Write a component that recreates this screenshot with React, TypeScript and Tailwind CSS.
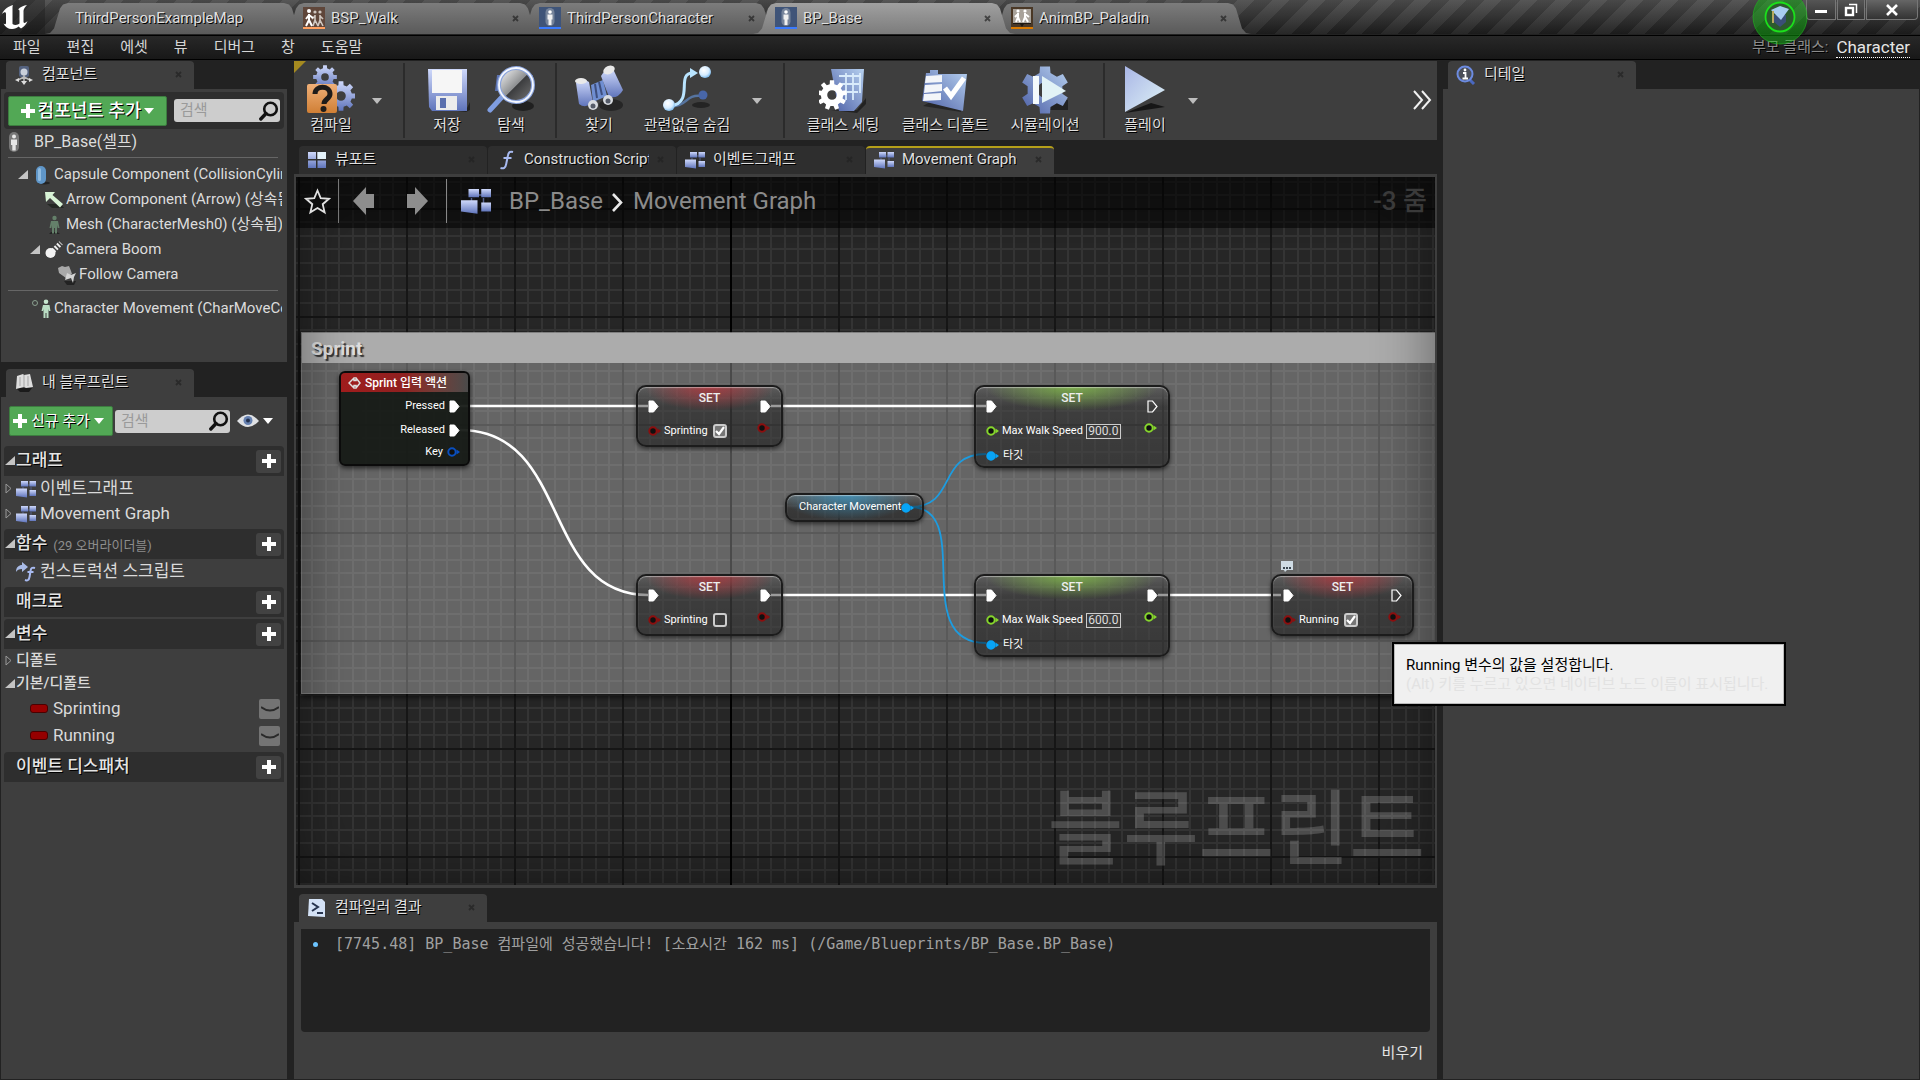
import type { ReactNode } from 'react';

const shadow = '[text-shadow:1px_1px_0_#000]';

/** Closed outline of a cog wheel with a round hole. */
function gear(cx: number, cy: number, r: number, teeth: number) {
  const inner = r * 0.74;
  const pts: string[] = [];
  for (let i = 0; i < teeth; i++) {
    const a = (i / teeth) * Math.PI * 2 - Math.PI / 2;
    const step = (Math.PI * 2) / teeth;
    const at = (rad: number, ang: number) =>
      `${(cx + rad * Math.cos(ang)).toFixed(2)} ${(cy + rad * Math.sin(ang)).toFixed(2)}`;
    pts.push(at(inner, a - step * 0.3), at(r, a - step * 0.2), at(r, a + step * 0.2), at(inner, a + step * 0.3));
  }
  const h = r * 0.32;
  return `M${pts.join('L')}ZM${cx - h} ${cy}a${h} ${h} 0 1 0 ${h * 2} 0a${h} ${h} 0 1 0 ${-h * 2} 0Z`;
}

function Defs() {
  return (
    <svg width="0" height="0" className="absolute" aria-hidden="true">
      <defs>
        <linearGradient id="blue" x1="0" y1="0" x2="0" y2="1">
          <stop offset="0" stopColor="#cfd9fb" />
          <stop offset="1" stopColor="#5f74bb" />
        </linearGradient>
        <linearGradient id="deep" x1="1" y1="0" x2="0" y2="1">
          <stop offset="0" stopColor="#b6d0ef" />
          <stop offset="1" stopColor="#4c5fa6" />
        </linearGradient>
        <linearGradient id="glass" x1="0" y1="0" x2="1" y2="1">
          <stop offset="0" stopColor="#fff" />
          <stop offset="0.5" stopColor="#8e9092" />
          <stop offset="0.52" stopColor="#3c3d3f" />
          <stop offset="1" stopColor="#777" />
        </linearGradient>
        <linearGradient id="orange" x1="0" y1="0" x2="0" y2="1">
          <stop offset="0" stopColor="#f0b078" />
          <stop offset="1" stopColor="#d07f35" />
        </linearGradient>
        <linearGradient id="play" x1="0" y1="0" x2="1" y2="1">
          <stop offset="0" stopColor="#a9b6e6" />
          <stop offset="1" stopColor="#dff3f6" />
        </linearGradient>
        <radialGradient id="ball" cx="0.4" cy="0.35" r="0.7">
          <stop offset="0" stopColor="#fff" />
          <stop offset="0.6" stopColor="#d5ecff" />
          <stop offset="1" stopColor="#6fb2e8" />
        </radialGradient>
      </defs>
    </svg>
  );
}

function Icon({ size = 20, box = 20, children }: { size?: number; box?: number; children: ReactNode }) {
  return (
    <svg width={size} height={size} viewBox={`0 0 ${box} ${box}`} className="shrink-0" aria-hidden="true">
      {children}
    </svg>
  );
}

function GraphIcon({ size = 20 }: { size?: number }) {
  return (
    <Icon size={size}>
      <path d="M10 6h4M15 8v5M7 8v4" stroke="#55608a" strokeWidth="1" />
      <rect x="5" y="2" width="7" height="5.5" fill="url(#blue)" />
      <rect x="13.5" y="2" width="6.5" height="5.5" fill="url(#blue)" />
      <rect x="13.5" y="11" width="6.5" height="6" fill="url(#blue)" />
      <path d="M0 9.5h11v9L0 17z" fill="url(#blue)" />
    </Icon>
  );
}

function FnIcon({ size = 20, arrow = false }: { size?: number; arrow?: boolean }) {
  return (
    <Icon size={size}>
      {arrow && <path d="M0 10C0 5 3 3 6 3V0l6 5-6 5V7C3 7 1 8 0 10z" fill="#a9bbe6" />}
      <path
        d={arrow ? 'M19 6c-3-1-4 0-4.500 3l-1 6c-.5 3-2 4-4.500 3M11.500 10h6' : 'M17 2c-3-1-4.500 0-5.200 4l-1.600 8c-.7 4-2.500 5-5.700 4M7.500 8h8'}
        fill="none"
        stroke="#a8baf0"
        strokeWidth="2"
      />
    </Icon>
  );
}

function PawnIcon() {
  return (
    <Icon>
      <rect x="5" y="0" width="10" height="20" rx="5" fill="#777" />
      <circle cx="10" cy="4.500" r="2" fill="#e8e8e8" />
      <path d="M7 7.500h6v5.500h-1.300v5.500H8.300V13H7z" fill="#e8e8e8" />
    </Icon>
  );
}

function PersonIcon({ color }: { color: string }) {
  return (
    <Icon>
      <path d="M5 19h11l-3-2H7z" fill="#222" />
      <circle cx="10.500" cy="3" r="2.200" fill={color} />
      <path d="M7 6h7l1.500 7h-1.800L13 10v8.500h-2V13h-1v5.500H8V10l-.7 3H5.500z" fill={color} />
    </Icon>
  );
}

function SearchIcon() {
  return (
    <svg width="20" height="20" viewBox="0 0 20 20" fill="none" stroke="#111" className="shrink-0" aria-hidden="true">
      <circle cx="11.500" cy="8" r="6.300" strokeWidth="2.600" />
      <path d="M7 12.500 1.800 18" strokeWidth="3.400" strokeLinecap="round" />
    </svg>
  );
}

function Plus() {
  return (
    <svg width="14" height="14" viewBox="0 0 14 14" className="shrink-0" aria-hidden="true">
      <path d="M5 0h4v5h5v4H9v5H5V9H0V5h5z" fill="#fff" />
    </svg>
  );
}

function Caret({ color = '#fff' }: { color?: string }) {
  return (
    <svg width="10" height="6" viewBox="0 0 10 6" className="shrink-0" aria-hidden="true">
      <path d="M0 0h10L5 6z" fill={color} />
    </svg>
  );
}

function Twisty({ open }: { open?: boolean }) {
  return (
    <svg width="10" height="10" viewBox="0 0 10 10" className="shrink-0" aria-hidden="true">
      {open ? <path d="M10 0v9H0z" fill="#c4c4c4" /> : <path d="M2 0v9l5-4.500z" fill="none" stroke="#999" />}
    </svg>
  );
}

function CloseMark() {
  return (
    <svg width="7" height="7" viewBox="0 0 7 7" className="shrink-0" aria-hidden="true">
      <path d="M1 1l5 5M6 1 1 6" stroke="#222" strokeOpacity="0.7" strokeWidth="1.800" />
    </svg>
  );
}

interface DocTabProps {
  label: string;
  icon?: ReactNode;
  active?: boolean;
  layer: string;
}

function DocTab({ label, icon, active, layer }: DocTabProps) {
  return (
    <button
      type="button"
      className={`relative flex h-[31px] w-[262px] shrink-0 items-center pr-6 pb-px text-left text-[15px] text-[#e0e0e0] [clip-path:polygon(0_100%,5px_97%,9px_82%,15px_18%,18px_5%,23px_0,calc(100%-23px)_0,calc(100%-18px)_5%,calc(100%-15px)_18%,calc(100%-9px)_82%,calc(100%-5px)_97%,100%_100%)] ${layer} ${icon ? 'pl-[22px]' : 'pl-[30px]'} ${active ? 'bg-linear-to-b from-[#a0a0a0] to-[#7c7c7c]' : 'bg-linear-to-b from-[#7c7c7c] to-[#5a5a5a]'}`}
    >
      {icon && <span className="mr-[6px] flex">{icon}</span>}
      <span className={`flex-1 truncate ${shadow}`}>{label}</span>
      {icon && <CloseMark />}
    </button>
  );
}

function PawnThumb() {
  return (
    <Icon size={22} box={22}>
      <rect width="22" height="22" fill="#3f5478" />
      <rect x="6.500" y="1" width="9" height="18" rx="4.500" fill="#75839a" />
      <circle cx="11" cy="5" r="1.800" fill="#fff" />
      <path d="M8.500 7.500h5v5h-1v5.500h-3v-5.500h-1z" fill="#f0f0f0" />
      <rect y="20" width="22" height="2" fill="#3b7bff" />
    </Icon>
  );
}

function WalkThumb() {
  return (
    <Icon size={22} box={22}>
      <rect width="22" height="22" fill="#5f463a" />
      <g fill="none" stroke="#cfc6bf" strokeWidth="1.600">
        <path d="M12 8v5l-2 6M12 13l3 6M12 9l-3 3M17 8v5l-2 6M17 13l3 6M17 9l3 3" />
      </g>
      <path d="M6 7v6l-3 6M6 13l3 6M6 8l-3 4M6 8l4 3" fill="none" stroke="#fff" strokeWidth="2" />
      <circle cx="6" cy="4" r="2" fill="#fff" />
      <circle cx="12" cy="5" r="1.600" fill="#cfc6bf" />
      <circle cx="17" cy="5" r="1.600" fill="#cfc6bf" />
      <rect y="20" width="22" height="2" fill="#ffa060" />
    </Icon>
  );
}

function AnimThumb() {
  return (
    <Icon size={22} box={22}>
      <rect width="22" height="22" fill="#4a3826" />
      <rect x="2" y="2" width="18" height="14" fill="#a8a29a" />
      <path d="M7 6v4l-2 5M7 10l2 5M7 7l-3 3M14 6v4l-2 5M14 10l3 5M14 7l4 3" fill="none" stroke="#fff" strokeWidth="2" />
      <circle cx="7" cy="4" r="1.600" fill="#fff" />
      <circle cx="14" cy="4" r="1.600" fill="#fff" />
      <path d="M2 16h18v1H2zM9 17h4l-2 3z" fill="#1d1710" />
      <rect y="20" width="22" height="2" fill="#d97a00" />
    </Icon>
  );
}

function TitleBar() {
  return (
    <header className="relative flex h-[34px] items-end bg-[repeating-linear-gradient(135deg,#ffffff0c_0_12px,#00000014_12px_25px),linear-gradient(#4e4e4e,#1d1d1d)]">
      <div className="flex h-full w-[45px] shrink-0 items-center bg-[#1c1c1c]/40">
        <svg width="26" height="26" viewBox="0 0 26 26" className="ml-[2px]" aria-hidden="true">
          <path
            d="M11 1C7 2 2 5 0 10c2-2 4-2.500 4 0v9c0 1.500-1 1.500-2.500.5C3 23 6 25 10 25c3 0 5-1 6.500-2.500L19 24.500c3-1.500 5.500-4.500 6.500-7.500-1.500 1.500-3.500 3-4 1V7c0-2 1.500-4 3.500-6-3 .5-7 2-9 4.500 1-.3 1.500.5 1.500 2v12c-1.500 1.500-5 2-7 .5V5c0-2 0-3 .5-4z"
            fill="#fff"
          />
        </svg>
      </div>
      <DocTab label="ThirdPersonExampleMap" layer="z-[5]" />
      <div className="-ml-[26px] flex min-w-0 flex-1">
        <DocTab label="BSP_Walk" layer="z-[4]" icon={<WalkThumb />} />
        <div className="-ml-[26px] flex">
          <DocTab label="ThirdPersonCharacter" layer="z-[3]" icon={<PawnThumb />} />
        </div>
        <div className="-ml-[26px] flex">
          <DocTab label="BP_Base" active layer="z-[6]" icon={<PawnThumb />} />
        </div>
        <div className="-ml-[26px] flex">
          <DocTab label="AnimBP_Paladin" layer="z-[2]" icon={<AnimThumb />} />
        </div>
      </div>
      <div className="mr-[2px] flex gap-px self-start">
        <button type="button" aria-label="Minimize" className="grid h-5 w-[30px] place-items-center rounded-bl border border-[#777] border-t-0 bg-linear-to-b from-[#555] to-[#333]">
          <span className="mt-1 h-[3px] w-3 bg-white" />
        </button>
        <button type="button" aria-label="Restore" className="grid h-5 w-[28px] place-items-center border border-[#777] border-t-0 bg-linear-to-b from-[#555] to-[#333]">
          <svg width="14" height="14" viewBox="0 0 14 14" fill="none" stroke="#fff" aria-hidden="true">
            <path d="M5 1.500h7.500V10" strokeWidth="1.500" />
            <rect x="2" y="5" width="7" height="7" strokeWidth="2.400" />
          </svg>
        </button>
        <button type="button" aria-label="Close" className="grid h-5 w-[52px] place-items-center rounded-br border border-[#777] border-t-0 bg-linear-to-b from-[#666] to-[#333]">
          <svg width="12" height="12" viewBox="0 0 12 12" stroke="#fff" strokeWidth="2.600" aria-hidden="true">
            <path d="M1 1l10 10M11 1 1 11" />
          </svg>
        </button>
      </div>
      <svg width="56" height="56" viewBox="0 0 56 56" className="pointer-events-none absolute -top-[11px] right-[112px] z-10" aria-hidden="true">
        <circle cx="28" cy="28" r="27" fill="#0bd00b" fillOpacity="0.4" stroke="#1fb81f" strokeOpacity="0.6" />
        <circle cx="28" cy="28" r="14.500" fill="#2c5a2c" stroke="#1be01b" strokeWidth="1.800" />
        <path d="M22 26v7l6 5 6-5v-7z" fill="#3b4f78" />
        <path d="M19 21l9-4 9 3-8 11z" fill="#a9cdf0" />
        <path d="M21 22v12" stroke="#b8a860" strokeWidth="2" />
      </svg>
    </header>
  );
}

function MenuBar() {
  const items = ['파일', '편집', '에셋', '뷰', '디버그', '창', '도움말'];
  return (
    <nav className="mt-px flex h-[25px] items-center border-y border-black bg-linear-to-b from-[#282828] to-[#181818] text-[15px] text-[#d6d6d6]">
      <div className="flex flex-1 gap-[26px] pl-[13px]">
        {items.map((item) => (
          <button key={item} type="button">
            {item}
          </button>
        ))}
      </div>
      <span className={`mr-2 text-[#8c8c8c] ${shadow}`}>부모 클래스:</span>
      <a href="#character" className="mr-[10px] border-b border-dotted border-white text-[17px] leading-5 text-[#e6e6e6]">
        Character
      </a>
    </nav>
  );
}

interface PanelTabProps {
  label: string;
  icon: ReactNode;
  idle?: boolean;
  marked?: boolean;
}

function PanelTab({ label, icon, idle, marked }: PanelTabProps) {
  return (
    <button
      type="button"
      className={`flex h-7 w-[188px] items-center gap-2 rounded-t-sm border-t-2 pr-3 pb-[3px] pl-2 text-left text-[15px] text-[#e0e0e0] ${idle ? 'border-[#2e2e2e] bg-[#2e2e2e]' : 'bg-[#3e3e3e]'} ${marked ? 'border-[#b59f1a]' : idle ? '' : 'border-[#3e3e3e]'}`}
    >
      {icon}
      <span className={`flex-1 overflow-hidden whitespace-nowrap ${shadow}`}>{label}</span>
      <CloseMark />
    </button>
  );
}

function SearchBox({ id, width }: { id: string; width: string }) {
  return (
    <label htmlFor={id} className={`flex h-[23px] items-center rounded-[3px] bg-[#cdcdcd] pr-px ${width}`}>
      <input
        id={id}
        type="text"
        placeholder="검색"
        aria-label="검색"
        className="w-full min-w-0 bg-transparent pl-[6px] text-[15px] text-black outline-none placeholder:text-[#9a9a9a]"
      />
      <SearchIcon />
    </label>
  );
}

interface TreeRowProps {
  label: string;
  icon: ReactNode;
  pad: string;
  open?: boolean;
}

function TreeRow({ label, icon, pad, open }: TreeRowProps) {
  return (
    <div className={`flex h-[25px] items-center overflow-hidden text-[15px] text-[#dcdcdc] ${pad}`}>
      <span className="flex w-[14px] shrink-0">{open && <Twisty open />}</span>
      {icon}
      <span className="ml-[2px] overflow-hidden whitespace-nowrap">{label}</span>
    </div>
  );
}

function ComponentsPanel() {
  return (
    <section>
      <div className="pl-[5px]">
        <PanelTab
          label="컴포넌트"
          icon={
            <Icon>
              <rect x="5" y="1" width="10" height="11" rx="2" fill="#54627f" />
              <circle cx="10" cy="7" r="3.500" fill="#c9cfda" />
              <path d="M10 10v7M10 12l-6 3M10 12l6 3" stroke="#bbb" strokeWidth="1.500" />
              <path d="M1 15l4-2v4zM19 15l-4-2v4zM7 16h6l-3 4z" fill="#ddd" />
            </Icon>
          }
        />
      </div>
      <div className="bg-[#3e3e3e] px-[3px] pt-[3px] pb-[41px]">
        <div className="flex h-[37px] items-center gap-[7px] rounded bg-[#2e2e2e] px-1">
          <button type="button" className={`flex h-[30px] w-[159px] shrink-0 items-center justify-center gap-[3px] rounded-[2px] border border-[#3d7d40] bg-[#52a855] text-lg font-medium whitespace-nowrap text-white ${shadow}`}>
            <Plus />
            컴포넌트 추가
            <Caret />
          </button>
          <SearchBox id="component-search" width="min-w-0 flex-1" />
        </div>
        <div className="mr-[2px]">
          <div className="flex h-[25px] items-center gap-[10px] text-base text-[#dcdcdc]">
            <PawnIcon />
            BP_Base(셀프)
          </div>
          <hr className="mx-1 mt-[3px] mb-1 border-[#666]" />
          <TreeRow
            label="Capsule Component (CollisionCylinder) (상속됨)"
            pad="pl-[14px]"
            open
            icon={
              <Icon>
                <ellipse cx="12" cy="18" rx="6" ry="1.500" fill="#222" />
                <rect x="4" y="1" width="10" height="18" rx="5" fill="#5f96c8" />
                <rect x="6" y="3" width="3" height="13" rx="1.500" fill="#8fbbe0" />
              </Icon>
            }
          />
          <TreeRow
            label="Arrow Component (Arrow) (상속됨)"
            pad="pl-[26px]"
            icon={
              <Icon>
                <path d="M3 14h14l3 4H8z" fill="#242824" />
                <path d="M1 2h10L8.500 5l10.500 9-3 3.500L6 8l-4 4z" fill="#d8f3d6" />
              </Icon>
            }
          />
          <TreeRow label="Mesh (CharacterMesh0) (상속됨)" pad="pl-[26px]" icon={<PersonIcon color="#64806a" />} />
          <TreeRow
            label="Camera Boom"
            pad="pl-[26px]"
            open
            icon={
              <Icon>
                <path d="M9 11l8-8" stroke="#eee" strokeWidth="5" strokeDasharray="2 1.500" />
                <circle cx="6.500" cy="13" r="5" fill="#f2f2f2" />
              </Icon>
            }
          />
          <TreeRow
            label="Follow Camera"
            pad="pl-[39px]"
            icon={
              <Icon>
                <path d="M7 16h12l-2 4H10z" fill="#222" />
                <path d="M1 3l4-2 3 1 4-1 2 5 1 3-6 4-7-5z" fill="#a9a9a9" />
                <path d="M10 8l4 2 5-2-2 4-1 6-2-5-6 2z" fill="#d4d4d4" />
              </Icon>
            }
          />
          <hr className="mx-1 mt-[3px] mb-[5px] border-[#666]" />
          <TreeRow
            label="Character Movement (CharMoveComp) (상속됨)"
            pad="pl-[14px]"
            icon={
              <Icon>
                <circle cx="3" cy="4" r="2.500" fill="none" stroke="#8aa08f" />
                <circle cx="14" cy="2.800" r="2.300" fill="#c6e6cf" />
                <path d="M11 6h6.500l1 6h-1.500l-.5-2v9h-2v-5h-1v5h-2v-9l-.5 2H9.500z" fill="#b9dcc3" />
              </Icon>
            }
          />
        </div>
      </div>
    </section>
  );
}

function SectionHead({ label, note, fold }: { label: string; note?: string; fold?: boolean }) {
  return (
    <div className="flex h-[30px] items-center rounded-t bg-[#2e2e2e] pr-[3px]">
      <span className="flex w-3 pl-px">{fold && <Twisty open />}</span>
      <h3 className={`text-[17px] font-medium text-[#e4e4e4] ${shadow}`}>{label}</h3>
      {note && <span className="ml-[6px] pt-1 text-[13px] text-[#8d8d8d]">{note}</span>}
      <button type="button" aria-label={`${label} +`} className="ml-auto grid h-[23px] w-[25px] place-items-center rounded-[3px] bg-[#424242]">
        <Plus />
      </button>
    </div>
  );
}

function GraphRow({ label, icon, twisty }: { label: string; icon: ReactNode; twisty?: boolean }) {
  return (
    <div className="flex h-[25px] items-center text-[17px] text-[#dadada]">
      <span className="flex w-3">{twisty && <Twisty />}</span>
      {icon}
      <span className="ml-1">{label}</span>
    </div>
  );
}

function VariableRow({ name }: { name: string }) {
  return (
    <div className="flex h-[27px] items-center pr-[4px] pl-[26px] text-[17px] text-[#dadada]">
      <span className="h-[9px] w-[18px] rounded-[3px] border border-[#4b0000] bg-[#960000]" />
      <span className="ml-[5px] flex-1">{name}</span>
      <button type="button" aria-label={`${name} visibility`} className="grid h-5 w-[21px] place-items-center rounded-[2px] bg-[#747474]">
        <svg width="18" height="8" viewBox="0 0 18 8" fill="none" stroke="#2a2a2a" strokeWidth="1.800" aria-hidden="true">
          <path d="M0 2q9 7 18 0" />
        </svg>
      </button>
    </div>
  );
}

function BlueprintPanel() {
  return (
    <section className="mt-[7px] flex flex-1 flex-col">
      <div className="pl-[5px]">
        <PanelTab
          label="내 블루프린트"
          icon={
            <Icon>
              <path d="M2 15h16l-3 4H6z" fill="#1b1b1b" />
              <path d="M3 3l6-2 1 1 6-1 3 13-7 1-2-1-8 2z" fill="#dedede" />
              <path d="M10 2v12M6 4v9M14 3v10" stroke="#a5a5a5" />
            </Icon>
          }
        />
      </div>
      <div className="flex-1 bg-[#3e3e3e] px-[3px] pt-[9px]">
        <div className="mb-[10px] flex items-center gap-[2px] pl-[5px]">
          <button type="button" className={`flex h-[30px] w-[104px] shrink-0 items-center gap-1 rounded-[2px] border border-[#3d7d40] bg-[#52a855] pl-[3px] text-[15px] whitespace-nowrap text-white ${shadow}`}>
            <Plus />
            신규 추가
            <Caret />
          </button>
          <SearchBox id="blueprint-search" width="w-[115px]" />
          <button type="button" aria-label="View options" className="ml-[5px] flex items-center gap-1">
            <svg width="22" height="14" viewBox="0 0 22 14" aria-hidden="true">
              <path d="M0 7q11-13 22 0-11 12-22 0z" fill="#dfe1e4" />
              <circle cx="11" cy="6.500" r="4.500" fill="#6580b0" />
              <circle cx="11" cy="6.500" r="2" fill="#23314f" />
            </svg>
            <Caret />
          </button>
        </div>
        <SectionHead label="그래프" fold />
        <GraphRow label="이벤트그래프" icon={<GraphIcon />} twisty />
        <GraphRow label="Movement Graph" icon={<GraphIcon />} twisty />
        <div className="h-[3px]" />
        <SectionHead label="함수" note="(29 오버라이더블)" fold />
        <GraphRow label="컨스트럭션 스크립트" icon={<FnIcon arrow />} />
        <div className="h-[3px]" />
        <SectionHead label="매크로" />
        <div className="h-[2px]" />
        <SectionHead label="변수" fold />
        <div className="flex h-[23px] items-center text-[15px] font-medium text-[#dadada]">
          <span className="flex w-3">
            <Twisty />
          </span>
          디폴트
        </div>
        <div className="flex h-[23px] items-center text-[15px] font-medium text-[#dadada]">
          <span className="flex w-3 pl-px">
            <Twisty open />
          </span>
          기본/디폴트
        </div>
        <VariableRow name="Sprinting" />
        <VariableRow name="Running" />
        <div className="h-[3px]" />
        <SectionHead label="이벤트 디스패처" />
      </div>
    </section>
  );
}

function ToolButton({ label, width, children }: { label: string; width: string; children: ReactNode }) {
  return (
    <button type="button" className={`flex shrink-0 flex-col items-center pt-[3px] ${width}`}>
      <svg width="48" height="50" viewBox="0 0 48 50" className="mb-px" aria-hidden="true">
        {children}
      </svg>
      <span className={`text-[15px] leading-5 whitespace-nowrap text-[#dedede] ${shadow}`}>{label}</span>
    </button>
  );
}

function ToolCaret({ label }: { label: string }) {
  return (
    <button type="button" aria-label={label} className="flex w-7 shrink-0 items-center justify-center">
      <Caret color="#bdbdbd" />
    </button>
  );
}

function ToolDivider() {
  return <div className="my-[2px] mr-[10px] ml-3 w-[2px] shrink-0 bg-[#2b2b2b]" />;
}

function Toolbar() {
  return (
    <div className="relative flex h-[79px] items-stretch overflow-hidden bg-[#3e3e3e] pl-[5px]">
      <span className="absolute top-0 left-0 h-3 w-3 bg-[#a58a20] [clip-path:polygon(0_0,100%_0,0_100%)]" />
      <ToolButton label="컴파일" width="w-16">
        <path d={gear(18, 13, 12, 8)} fill="url(#blue)" fillRule="evenodd" />
        <path d={gear(34, 32, 15, 8)} fill="url(#blue)" fillRule="evenodd" />
        <rect x="0" y="20" width="30" height="29" rx="2" fill="url(#orange)" />
        <path d="M8 30c0-9 15-9 15 0 0 5-6 5-6 10" fill="none" stroke="#1f1c1a" strokeWidth="5" />
        <circle cx="16.500" cy="45" r="3" fill="#1f1c1a" />
      </ToolButton>
      <ToolCaret label="컴파일 옵션" />
      <ToolDivider />
      <ToolButton label="저장" width="w-16">
        <path d="M10 44h34l3-6v8l-4 2z" fill="#222" />
        <path d="M5 5h39v42H9l-3-4z" fill="url(#blue)" />
        <path d="M9 6h30v23H9z" fill="#f6f6f6" />
        <path d="M13 32h21v14H13z" fill="#ececec" />
        <path d="M17 34h6v10h-6z" fill="#5b70ae" />
      </ToolButton>
      <ToolButton label="탐색" width="w-16">
        <ellipse cx="36" cy="42" rx="11" ry="5" fill="#202020" />
        <path d="M10 11h36l-2 16H8z" fill="#5c72b0" />
        <path d="M15 33 3 46" stroke="#7f9de0" strokeWidth="5" strokeLinecap="round" />
        <circle cx="29" cy="21" r="17" fill="url(#glass)" stroke="#8ba4dc" strokeWidth="4" />
        <circle cx="29" cy="21" r="17" fill="none" stroke="#f5f8ff" strokeWidth="1.800" />
      </ToolButton>
      <ToolDivider />
      <ToolButton label="찾기" width="w-16">
        <ellipse cx="36" cy="41" rx="12" ry="6" fill="#262626" />
        <path d="M16 21l12-5 4 16-14 6z" fill="#6f8ed2" />
        <path d="M20 20l2 14M24 18l3 13" stroke="#3e4f7e" strokeWidth="2" />
        <path d="M1 19q6-6 13-1l4 21q-8 6-14 1z" fill="url(#blue)" />
        <path d="M26 12q6-10 13-5l9 19q-5 9-14 7z" fill="url(#blue)" />
        <ellipse cx="6" cy="17" rx="6" ry="3" fill="#e9e9e9" />
        <ellipse cx="34" cy="6" rx="6" ry="4" fill="#e9e9e9" transform="rotate(-25 34 6)" />
        <circle cx="18" cy="41" r="5" fill="#d8dbe0" />
        <circle cx="33" cy="36" r="5" fill="#d8dbe0" />
        <circle cx="18" cy="42" r="2.500" fill="#555b68" />
        <circle cx="33" cy="37" r="2.500" fill="#555b68" />
      </ToolButton>
      <ToolButton label="관련없음 숨김" width="w-28">
        <ellipse cx="38" cy="41" rx="9" ry="3" fill="#242424" />
        <path d="M6 42C24 44 22 30 38 32" fill="none" stroke="#56749f" strokeWidth="2.500" />
        <path d="M8 42c24-4 4-33 22-33" fill="none" stroke="#b9e4ff" strokeWidth="3" />
        <path d="M27 4l8 5-8 5z" fill="#b9e4ff" />
        <circle cx="42" cy="8" r="6" fill="url(#ball)" />
        <circle cx="6" cy="41" r="6" fill="url(#ball)" />
        <circle cx="40" cy="31" r="4.500" fill="#4866a8" />
      </ToolButton>
      <ToolCaret label="관련없음 숨김 옵션" />
      <ToolDivider />
      <ToolButton label="클래스 세팅" width="w-24">
        <path d="M12 46h26l9-12v6l-9 9z" fill="#222" />
        <path d="M12 5h33l-2 33-8 9H20z" fill="url(#deep)" />
        <path d="M20 12h21M22 20h18M23 28h16M27 9v27M34 9v27M41 9v20" stroke="#d9ebfb" strokeWidth="1.800" />
        <path d={gear(13, 31, 15, 9)} fill="#fff" fillRule="evenodd" />
      </ToolButton>
      <ToolButton label="클래스 디폴트" width="w-[108px]">
        <path d="M2 42l38 6V20z" fill="#262626" />
        <path d="M5 9h4V6h8v4h29l-4 37L1 37z" fill="url(#deep)" />
        <path d="M5 12l16-1v7l-17 1zM4 21l17-1v7L3 29zM3 30l17-1v7L2 37z" fill="#f3f5f9" />
        <path d="M24 24l6 8L43 14" fill="none" stroke="#fff" strokeWidth="5" />
      </ToolButton>
      <ToolButton label="시뮬레이션" width="w-[92px]">
        <path d="M18 46h29V36h-8z" fill="#222" />
        <path d={gear(24, 26, 24, 6)} fill="url(#deep)" />
        <path d="M12 12h6v28h-6z" fill="#f4fafc" />
        <path d="M21 12l24 15-24 12z" fill="#e2f3f6" />
      </ToolButton>
      <ToolDivider />
      <ToolButton label="플레이" width="w-[60px]">
        <path d="M4 49l40-6-14-4z" fill="#161616" />
        <path d="M4 2l40 24L4 48z" fill="url(#play)" />
      </ToolButton>
      <div className="w-1" />
      <ToolCaret label="플레이 옵션" />
      <button type="button" aria-label="More" className="mr-[5px] mb-[2px] ml-auto">
        <svg width="19" height="20" viewBox="0 0 19 20" fill="none" stroke="#f0f0f0" strokeWidth="2" aria-hidden="true">
          <path d="M1 1l8 9-8 9M9 1l8 9-8 9" />
        </svg>
      </button>
    </div>
  );
}

function ExecPin({ linked = false }: { linked?: boolean }) {
  return (
    <svg width="11" height="13" viewBox="0 0 11 13" className="shrink-0" aria-hidden="true">
      <path d="M1 1h4.500l4.500 5.500L5.500 12H1z" fill={linked ? '#fff' : 'none'} stroke="#fff" strokeWidth={linked ? 1 : 1.2} />
    </svg>
  );
}

function DataPin({ color, linked }: { color: string; linked?: boolean }) {
  return (
    <svg width="13" height="10" viewBox="0 0 13 10" className="shrink-0" aria-hidden="true">
      <circle cx="5" cy="5" r="3.700" fill={linked ? color : '#101010'} stroke={color} strokeWidth="2" />
      <path d="M9.500 2.500 13 5 9.500 7.500z" fill={color} />
    </svg>
  );
}

const RED = '#8c0e0e';
const GREEN = '#86d62c';
const BLUE = '#08a4f5';

interface SetNodeProps {
  place: string;
  field: string;
  checked?: boolean;
  amount?: string;
  endLinked?: boolean;
}

/** "SET" node: a check box for booleans, a number box and a target pin for floats. */
function SetNode({ place, field, checked, amount, endLinked }: SetNodeProps) {
  const float = amount !== undefined;
  const color = float ? GREEN : RED;
  return (
    <div
      className={`absolute flex justify-between rounded-[10px] border-2 border-[#1c1c1c] text-[11px] text-white shadow-[0_2px_4px_#0008,inset_0_1px_1px_#ffffff70] ${place} ${float ? 'bg-[radial-gradient(45%_24px_at_50%_0,#86c845bb,transparent),linear-gradient(#ffffff26,transparent_20px),linear-gradient(#00000060,#00000070)]' : 'bg-[radial-gradient(45%_24px_at_50%_0,#c03038bb,transparent),linear-gradient(#ffffff26,transparent_20px),linear-gradient(#00000060,#00000070)] pb-1'}`}
    >
      <h4 className="absolute inset-x-0 top-[3px] text-center text-xs font-medium text-[#eee]">SET</h4>
      <div className="flex flex-col gap-[5px] pt-[9px] pl-[10px]">
        <span className="flex h-5 items-center">
          <ExecPin linked />
        </span>
        <label className="flex h-5 items-center gap-[3px] whitespace-nowrap">
          <DataPin color={color} />
          {field}
          {float ? (
            <input type="text" defaultValue={amount} className="h-[15px] w-[35px] border border-[#ccc] bg-transparent text-center text-xs leading-3 text-[#ddd]" />
          ) : (
            <span className="relative ml-[2px] flex">
              <input type="checkbox" defaultChecked={checked} className="peer h-[14px] w-[14px] appearance-none rounded-[3px] border-2 border-[#ccc] checked:bg-[#777]" />
              <svg width="14" height="14" viewBox="0 0 14 14" fill="none" stroke="#fff" strokeWidth="2.200" className="pointer-events-none absolute inset-0 hidden peer-checked:block" aria-hidden="true">
                <path d="M3 7l3 3 5-7" />
              </svg>
            </span>
          )}
        </label>
        {float && (
          <span className="flex h-5 items-center gap-1">
            <DataPin color={BLUE} linked />
            타깃
          </span>
        )}
      </div>
      <div className="flex flex-col gap-[2px] pt-[9px] pr-[10px]">
        <span className="flex h-5 items-center">
          <ExecPin linked={endLinked} />
        </span>
        <span className="-ml-[3px] flex h-5 items-center">
          <DataPin color={color} />
        </span>
      </div>
    </div>
  );
}

function EventNode() {
  return (
    <div className="absolute top-[194px] left-[43px] w-[131px] overflow-hidden rounded-[6px] border-2 border-[#0b0b0b] bg-[#161a16]/95 pb-[2px] text-[11px] text-white shadow-[0_2px_5px_#000a]">
      <h4 className="flex h-[19px] items-center gap-1 bg-linear-to-r from-[#a01c1c] via-[#8f2020] to-[#4a4a4a] pl-[7px] text-xs font-medium whitespace-nowrap">
        <svg width="13" height="12" viewBox="0 0 13 12" fill="none" stroke="#ddd" strokeWidth="1.500" aria-hidden="true">
          <path d="M6 1 1 6l5 5V8.500h2V11l4-5-4-5v2.500H6z" />
        </svg>
        Sprint 입력 액션
      </h4>
      <div className="flex flex-col items-end pt-[2px] pr-2">
        <span className="flex h-6 items-center gap-1">
          Pressed <ExecPin linked />
        </span>
        <span className="flex h-6 items-center gap-1">
          Released <ExecPin linked />
        </span>
        <span className="flex h-5 items-center gap-1">
          Key <DataPin color="#0a4fbf" />
        </span>
      </div>
    </div>
  );
}

function Grid() {
  return (
    <svg className="absolute inset-0 h-full w-full" aria-hidden="true">
      <defs>
        <pattern id="minor" width="27" height="27" x="2" y="4" patternUnits="userSpaceOnUse">
          <path d="M0 1h27M0 14h27M1 0v27M14 0v27" stroke="#343434" strokeWidth="2" />
        </pattern>
        <pattern id="major" width="108" height="108" x="2" y="31" patternUnits="userSpaceOnUse">
          <path d="M0 1h108M1 0v108" stroke="#161616" strokeWidth="2" />
        </pattern>
      </defs>
      <rect width="100%" height="100%" fill="#262626" />
      <rect width="100%" height="100%" fill="url(#minor)" />
      <rect width="100%" height="100%" fill="url(#major)" />
      <rect x="434" width="2" height="100%" fill="#000" />
    </svg>
  );
}

function Wires() {
  return (
    <svg className="absolute inset-0 h-full w-full" fill="none" aria-hidden="true">
      <g stroke="#fff" strokeWidth="2.600">
        <path d="M164 229H352M475 229H690M475 418H690M862 418H985" />
        <path d="M164 253C276 253 244 418 352 418" />
      </g>
      <g stroke="#1d9ce0" strokeWidth="1.800">
        <path d="M614 330C662 330 640 277 690 277" />
        <path d="M614 330C680 330 612 466 690 466" />
      </g>
    </svg>
  );
}

function GraphPath() {
  return (
    <div className="relative flex h-[51px] items-center bg-black/55 px-2 pb-[3px] text-2xl text-[#8b8b8b]">
      <button type="button" aria-label="Favorite">
        <svg width="27" height="27" viewBox="0 0 27 27" fill="none" stroke="#e2e2e2" strokeWidth="1.800" aria-hidden="true">
          <path d="M13.500 2.500l3.200 7.600 8.300.7-6.300 5.400 1.900 8.100-7.100-4.300-7.100 4.300 1.900-8.100L2 10.800l8.300-.7z" />
        </svg>
      </button>
      <span className="ml-[7px] h-11 w-px bg-[#777]" />
      <button type="button" aria-label="Back" className="ml-[14px]">
        <svg width="22" height="28" viewBox="0 0 22 28" fill="#8d8d8d" aria-hidden="true">
          <path d="M0 14 13 0v7h8v14h-8v7z" />
        </svg>
      </button>
      <button type="button" aria-label="Forward" className="ml-[31px]">
        <svg width="22" height="28" viewBox="0 0 22 28" fill="#8d8d8d" aria-hidden="true">
          <path d="M22 14 9 0v7H1v14h8v7z" />
        </svg>
      </button>
      <span className="mr-[14px] ml-[18px] h-11 w-px bg-[#888]" />
      <GraphIcon size={30} />
      <button type="button" className="ml-[18px]">
        BP_Base
      </button>
      <svg width="12" height="19" viewBox="0 0 12 19" fill="none" stroke="#e8e8e8" strokeWidth="2.600" className="mx-[9px] mt-[2px]" aria-hidden="true">
        <path d="M1 1l8 8.500L1 18" />
      </svg>
      <button type="button">Movement Graph</button>
      <span className="ml-auto text-[26px] font-medium text-[#3a3a3a]">-3 줌</span>
    </div>
  );
}

function GraphCanvas() {
  return (
    <div className="relative min-h-[600px] flex-1 overflow-hidden border-x-2 border-y-[3px] border-[#3e3e3e]">
      <Grid />
      <div className="absolute top-[155px] right-0 left-[5px] h-[362px] border border-r-0 border-[#999]/50 bg-white/29 shadow-[0_3px_6px_#000a]">
        <h2 className="h-[30px] bg-[#acacac] pl-[9px] text-[19px] leading-[31px] font-bold text-[#dedede] [text-shadow:2px_2px_1px_#333]">Sprint</h2>
      </div>
      <div className="absolute inset-0 shadow-[inset_0_0_60px_#0007]" />
      <Wires />
      <EventNode />
      <SetNode place="left-[340px] top-[208px] w-[147px]" field="Sprinting" checked endLinked />
      <SetNode place="left-[340px] top-[397px] w-[147px]" field="Sprinting" endLinked />
      <SetNode place="left-[678px] top-[208px] w-[196px]" field="Max Walk Speed" amount="900.0" />
      <SetNode place="left-[678px] top-[397px] w-[196px]" field="Max Walk Speed" amount="600.0" endLinked />
      <SetNode place="left-[975px] top-[397px] w-[143px]" field="Running" checked />
      <div className="absolute top-[316px] left-[489px] flex h-[29px] w-[139px] items-center justify-between rounded-[10px] border-2 border-[#1c1c1c] bg-[radial-gradient(50%_26px_at_45%_0,#3a9cccbb,transparent),linear-gradient(#ffffff30,transparent_14px),linear-gradient(#00000066,#00000078)] pr-[9px] pl-3 text-[11px] whitespace-nowrap text-white shadow-[0_2px_4px_#0008,inset_0_1px_1px_#ffffff70]">
        Character Movement
        <DataPin color={BLUE} linked />
      </div>
      <svg width="13" height="13" viewBox="0 0 13 13" className="absolute top-[383px] left-[985px]" aria-hidden="true">
        <path d="M0 1h12v9H6l-2 2-1-2H0z" fill="#cfdbe4" />
        <path d="M2 7h2v2H2zM5 7h2v2H5zM8 7h2v2H8z" fill="#3b4650" />
      </svg>
      <div className="absolute right-[10px] bottom-[14px] text-[82px] leading-none font-medium text-white/18">블루프린트</div>
      <GraphPath />
    </div>
  );
}

function CompilerPanel() {
  return (
    <section className="mt-[6px]">
      <div className="pl-[5px]">
        <PanelTab
          label="컴파일러 결과"
          icon={
            <Icon>
              <path d="M2 1h13l3 3v15L1 18z" fill="#d4e2f6" />
              <path d="M5 5l6 4-6 4M10 15h6" fill="none" stroke="#27344f" strokeWidth="2" />
            </Icon>
          }
        />
      </div>
      <div className="bg-[#3e3e3e] px-[7px] pt-[7px] pb-[14px]">
        <div className="flex min-h-[103px] items-start rounded-b-sm bg-[#222] pt-1 pl-3 font-['DejaVu_Sans_Mono','Noto_Sans_CJK_KR',monospace] text-[15px] leading-[22px] text-[#a0a0a0]">
          <span className="mt-[9px] mr-[17px] h-[5px] w-[5px] shrink-0 rounded-full bg-[#6cc4ff]" />
          <p>[7745.48] BP_Base 컴파일에 성공했습니다! [소요시간 162 ms] (/Game/Blueprints/BP_Base.BP_Base)</p>
        </div>
        <div className="mt-[9px] flex justify-end pr-[7px]">
          <button type="button" className="text-[15px] leading-6 text-[#e4e4e4]">
            비우기
          </button>
        </div>
      </div>
    </section>
  );
}

function DetailsPanel() {
  return (
    <aside className="flex w-[476px] shrink-0 flex-col">
      <div className="pl-[5px]">
        <PanelTab
          label="디테일"
          icon={
            <Icon>
              <path d="M13 14l5 5" stroke="#4a68c0" strokeWidth="3" />
              <circle cx="9" cy="9" r="7.500" fill="#4b4f58" stroke="#6c8be0" strokeWidth="2" />
              <circle cx="9" cy="5" r="1.400" fill="#fff" />
              <path d="M7 8h2.500v5M6.500 13.500h5.500" fill="none" stroke="#fff" strokeWidth="1.800" />
            </Icon>
          }
        />
      </div>
      <div className="flex-1 bg-[#3e3e3e]" />
    </aside>
  );
}

export default function App() {
  return (
    <div className="relative flex min-h-screen flex-col bg-[#222] font-['Roboto','Noto_Sans_CJK_KR',sans-serif]">
      <Defs />
      <TitleBar />
      <MenuBar />
      <main className="flex flex-1 px-px pt-px pb-px">
        <div className="flex w-[286px] shrink-0 flex-col">
          <ComponentsPanel />
          <BlueprintPanel />
        </div>
        <div className="mr-[6px] ml-[7px] flex min-w-0 flex-1 flex-col">
          <Toolbar />
          <div className="mt-[6px] flex gap-px pl-[5px]">
            <PanelTab
              label="뷰포트"
              idle
              icon={
                <Icon>
                  <path d="M1 2h8v7H1zM10.500 2H19v7h-8.500zM1 10.500h8V18H1zM10.500 10.500H19V18h-8.500z" fill="url(#blue)" />
                  <path d="M10.500 2H19v7h-8.500z" fill="#e4f2fa" />
                </Icon>
              }
            />
            <PanelTab label="Construction Script" idle icon={<FnIcon />} />
            <PanelTab label="이벤트그래프" idle icon={<GraphIcon />} />
            <PanelTab label="Movement Graph" marked icon={<GraphIcon />} />
          </div>
          <GraphCanvas />
          <CompilerPanel />
        </div>
        <DetailsPanel />
      </main>
      <div role="tooltip" className="absolute top-[642px] left-[1392px] z-20 border-2 border-black bg-[#f0f0f0] pt-3 pr-4 pb-[10px] pl-3 text-[15px] leading-[19px] shadow-[inset_0_0_0_1px_#bbb]">
        <p className="text-black">Running 변수의 값을 설정합니다.</p>
        <p className="whitespace-nowrap text-[#e2e2e2]">(Alt) 키를 누르고 있으면 네이티브 노드 이름이 표시됩니다.</p>
      </div>
    </div>
  );
}
